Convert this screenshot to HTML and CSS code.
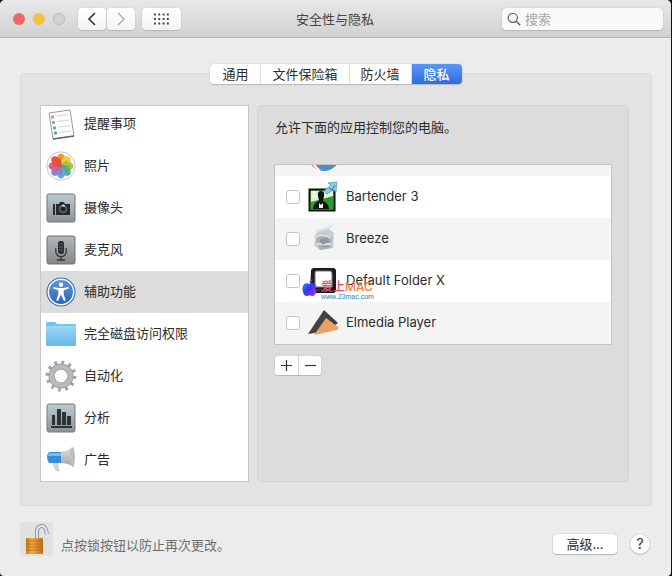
FILE: index.html
```html
<!DOCTYPE html>
<html lang="zh-CN">
<head>
  <meta charset="UTF-8">
  <meta name="viewport" content="width=device-width, initial-scale=1.0">
  <title>安全性与隐私</title>
  <link rel="stylesheet" href="styles.css">
</head>
<body>
  <div class="window">
    <header class="titlebar">
      <div class="controls">
        <div class="lights">
          <span class="light red"></span>
          <span class="light yellow"></span>
          <span class="light off"></span>
        </div>
        <div class="nav">
          <button class="tool" aria-label="后退">
            <svg width="10" height="14" viewBox="0 0 10 14"><path d="M8 1 2 7l6 6" fill="none" stroke="#333" stroke-width="1.6"/></svg>
          </button>
          <button class="tool" aria-label="前进">
            <svg width="10" height="14" viewBox="0 0 10 14"><path d="m2 1 6 6-6 6" fill="none" stroke="#a6a6a6" stroke-width="1.3"/></svg>
          </button>
        </div>
        <button class="tool grid-button" aria-label="显示全部">
          <svg width="15" height="12" viewBox="0 0 15 12"><path d="M0 1.500h15M0 6h15M0 10.500h15" stroke="#444" stroke-width="1.800" stroke-dasharray="1.900 2.400"/></svg>
        </button>
      </div>
      <h1>安全性与隐私</h1>
      <label class="search">
        <svg width="14" height="14" viewBox="0 0 14 14"><circle cx="5.800" cy="5.800" r="4.600" fill="none" stroke="#555" stroke-width="1.1"/><path d="m9.200 9.200 4 4" stroke="#555" stroke-width="1.3"/></svg>
        <input type="text" placeholder="搜索" aria-label="搜索">
      </label>
    </header>

    <main>
      <div class="tabs">
        <button>通用</button>
        <button>文件保险箱</button>
        <button>防火墙</button>
        <button class="active">隐私</button>
      </div>

      <section class="panel">
        <ul class="services">
          <li>
            <svg width="30" height="32" viewBox="0 0 30 32"><path d="M3 5 24 2l4 26-21 3z" fill="#fdfdfd" stroke="#999" /><path d="m7 31 21-3" stroke="#666" stroke-width="1.5"/><path d="m11 8 11-1.500M11.500 13.500l12-1.500M12.500 19l12-1.500M13 24.500l12-1.500" stroke="#d4d4d4"/><circle cx="6.500" cy="9" r="1.700" fill="#ee8a73"/><circle cx="7.500" cy="14.500" r="1.700" fill="#65b6cc"/><circle cx="8.500" cy="20" r="1.700" fill="#5cb687"/><circle cx="9.500" cy="25" r="1.700" fill="#58a98e"/></svg>
            <span>提醒事项</span>
          </li>
          <li>
            <svg width="30" height="30" viewBox="0 0 30 30"><circle cx="15" cy="15" r="14.200" fill="#fbfbfb" stroke="#c5c8ce"/><g opacity=".9"><ellipse cx="15" cy="8.500" rx="4.300" ry="6" fill="#f58e1e"/><ellipse cx="15" cy="8.500" rx="4.300" ry="6" fill="#e8cf25" transform="rotate(45 15 15)"/><ellipse cx="15" cy="8.500" rx="4.300" ry="6" fill="#9cc235" transform="rotate(90 15 15)"/><ellipse cx="15" cy="8.500" rx="4.300" ry="6" fill="#45a878" transform="rotate(135 15 15)"/><ellipse cx="15" cy="8.500" rx="4.300" ry="6" fill="#5b9bd8" transform="rotate(180 15 15)"/><ellipse cx="15" cy="8.500" rx="4.300" ry="6" fill="#8579c2" transform="rotate(225 15 15)"/><ellipse cx="15" cy="8.500" rx="4.300" ry="6" fill="#cf5482" transform="rotate(270 15 15)"/><ellipse cx="15" cy="8.500" rx="4.300" ry="6" fill="#e8432f" transform="rotate(315 15 15)"/></g><path d="M15 15V6M15 15l6-6M15 15h9M15 15l6 6M15 15v9M15 15l-6 6M15 15H6M15 15 9 9" stroke="#8a3b2c" stroke-width=".6" opacity=".5"/></svg>
            <span>照片</span>
          </li>
          <li>
            <svg width="30" height="30" viewBox="0 0 30 30">
              <defs><linearGradient id="metal" x2="0" y2="1"><stop offset="0" stop-color="#bccbd3"/><stop offset="1" stop-color="#8c9295"/></linearGradient></defs>
              <rect x="1" y="1" width="28" height="28" rx="2" fill="url(#metal)" stroke="#70777c"/><path d="M7 11h2v11H7zM10 11h3l1-2h4l1 2h5v11H10z" fill="#272b2e"/><circle cx="17" cy="16" r="4" fill="#62696e"/><circle cx="17" cy="16" r="2.500" fill="#202326"/><path d="m15 13 3-2 1 3z" fill="#d6dcdf"/></svg>
            <span>摄像头</span>
          </li>
          <li>
            <svg width="30" height="30" viewBox="0 0 30 30">
              <defs><linearGradient id="steel" x2="0" y2="1"><stop offset="0" stop-color="#b2b9bb"/><stop offset="1" stop-color="#858787"/></linearGradient></defs>
              <rect x="1" y="1" width="28" height="28" rx="2" fill="url(#steel)" stroke="#6d7072"/><rect x="12" y="6" width="6" height="13" rx="2.500" fill="#2c2f31"/><path d="M13 9h4M13 12h4M13 15h4" stroke="#70777a" stroke-width=".7"/><path d="M9.800 13v3.500a5.200 5.200 0 0 0 10.400 0V13M15 22v2.500M11 25h8" fill="none" stroke="#34383a" stroke-width="1.300"/></svg>
            <span>麦克风</span>
          </li>
          <li class="selected">
            <svg width="30" height="32" viewBox="0 0 30 32">
              <defs><linearGradient id="access" x2="0" y2="1"><stop offset="0" stop-color="#6596d7"/><stop offset="1" stop-color="#2865b8"/></linearGradient></defs>
              <circle cx="15" cy="16" r="14.500" fill="#3468ac"/><circle cx="15" cy="16" r="12.700" fill="url(#access)" stroke="#f3f7ff" stroke-width="1.600"/><circle cx="15" cy="8.700" r="2.200" fill="#fff"/><path d="m7.500 11 5 1h5l5-1 .4 1.500-5.200 1.800v4l2 6-1.700.7-3-6.500-3 6.500-1.700-.7 2-6v-4l-5.200-1.800z" fill="#fff"/></svg>
            <span>辅助功能</span>
          </li>
          <li>
            <svg width="32" height="26" viewBox="0 0 32 26">
              <defs><linearGradient id="folder" x2="0" y2="1"><stop offset="0" stop-color="#9bd8f7"/><stop offset="1" stop-color="#67b8e8"/></linearGradient></defs>
              <path d="M1 2q0-1 1-1h8l2 2h18q1 0 1 1v20H1z" fill="#79c2ea"/><path d="M1 5h30v19q0 1-1 1H2q-1 0-1-1z" fill="url(#folder)"/></svg>
            <span>完全磁盘访问权限</span>
          </li>
          <li>
            <svg width="32" height="32" viewBox="0 0 32 32"><circle cx="16" cy="16" r="13.500" fill="none" stroke="#a3a3a3" stroke-width="4" stroke-dasharray="2.800 4.270"/><circle cx="16" cy="16" r="9.500" fill="none" stroke="#949494" stroke-width="6"/><circle cx="16" cy="16" r="9.500" fill="none" stroke="#bababa" stroke-width="4.600"/></svg>
            <span>自动化</span>
          </li>
          <li>
            <svg width="30" height="30" viewBox="0 0 30 30"><rect x="1" y="1" width="28" height="28" rx="2" fill="url(#metal)" stroke="#777d80"/><path d="M6 12h3v10H6zM11 6h4v16h-4zM16 9h4v13h-4zM21 13h4v9h-4zM5 23h21v2H5z" fill="#2d3235"/></svg>
            <span>分析</span>
          </li>
          <li>
            <svg width="30" height="28" viewBox="0 0 30 28">
              <defs><linearGradient id="horn" x2="0" y2="1"><stop offset="0" stop-color="#e1e1e1"/><stop offset="1" stop-color="#9fa2a4"/></linearGradient></defs>
              <path d="m6 16 4 8 3 1-2-9z" fill="#d3d7db" stroke="#adb3b7" stroke-width=".6"/><path d="M14 6q8-1 12-5l2 20q-6-4-14-4z" fill="url(#horn)"/><ellipse cx="26.500" cy="11" rx="2.500" ry="10" fill="#bcbec0"/><path d="M3 6h12v11H3Q-1 11 3 6z" fill="#388ed5"/><path d="M3 7h12v3H2z" fill="#77bbed"/></svg>
            <span>广告</span>
          </li>
        </ul>

        <div class="detail">
          <p>允许下面的应用控制您的电脑。</p>

          <div class="apps-wrap">
            <ul class="apps">
              <li class="clipped">
                <svg width="30" height="34" viewBox="0 0 30 34"><circle cx="16" cy="17" r="16" fill="#4b8ecb"/><path d="M1 16q2 12 10 16.500l1-1-4-15z" fill="#de5460"/><path d="m3 24 9 9" stroke="#fff" stroke-width="2"/></svg>
              </li>
              <li>
                <input type="checkbox" id="bartender">
                <label for="bartender">
                  <svg width="30" height="32" viewBox="0 0 30 32"><rect x="1.500" y="8.500" width="25" height="21" fill="#5fc847" stroke="#111" stroke-width="2"/><path d="M3 10h22v7L3 21z" fill="#e8f3df"/><path d="m3 21 22-6v13H3z" fill="#2a9c2c"/><path d="M5 28q1-7 6-8l-1-5q-1-5 3-5t3 5l-1 5q5 1 6 8z" fill="#0b1610"/><path d="m11 22 2 2 2-2v5h-4z" fill="#fff"/><path d="m16 10 7-6-3-2 9-1-1 10-3-2-6 4z" fill="#8bcee7" stroke="#518ea9" stroke-width=".7"/><path d="m21 7 3 2 3-5" fill="none" stroke="#396f8a"/></svg>
                  <span>Bartender 3</span>
                </label>
              </li>
              <li>
                <input type="checkbox" id="breeze">
                <label for="breeze">
                  <svg width="30" height="30" viewBox="0 0 30 30"><path d="M9 8 20 4l6 5-1 15-13 2-6-5z" fill="#c9ccd0"/><path d="m7 11 9-2 8 4-1 11-11 2-3-7z" fill="#acb0b6"/><path d="m8 7 10-2 7-4M6 14q8-6 17 0M9 20h14" fill="none" stroke="#dfe2e5" stroke-width="2"/><path d="m12 16 7-2 2 4-7 2zM14 23l7-1" fill="#92979e" stroke="#92979e"/></svg>
                  <span>Breeze</span>
                </label>
              </li>
              <li>
                <input type="checkbox" id="folderx">
                <label for="folderx">
                  <svg width="30" height="30" viewBox="0 0 30 30"><path d="M6 2h19q3 0 3 3v19q0 3-3 3H5q-3 0-3-3L3 5q0-3 3-3z" fill="#1d1d1f"/><path d="M8 5h14q2 0 2 2v14H7V7q0-2 1-2z" fill="#fff" stroke="#777"/><path d="M7 24h16" stroke="#555"/></svg>
                  <span>Default Folder X</span>
                </label>
              </li>
              <li>
                <input type="checkbox" id="elmedia">
                <label for="elmedia">
                  <svg width="32" height="28" viewBox="0 0 32 28"><path d="M17 1 31 14 20 22 1 25z" fill="#3d4244"/><path d="M19 9 31 18q1 2-1 3L7 26z" fill="#e9a165"/></svg>
                  <span>Elmedia Player</span>
                </label>
              </li>
            </ul>

            <div class="watermark">
              <svg width="15" height="18" viewBox="0 0 15 18">
                <defs><linearGradient id="apple" x2="1" y2="1"><stop offset="0" stop-color="#20b8ff"/><stop offset=".5" stop-color="#3633f3"/><stop offset="1" stop-color="#c12cef"/></linearGradient></defs>
                <path d="M7.500 5C10 3 12.500 4 14 6q-2 3 .5 7-2 4-4 4-1.500 0-3-.7-1.500.7-3 .7C2 17 0 12 .5 9 1 4.500 4.500 3.500 7.500 5zM7.500 4q0-3 3-4 0 3-3 4z" fill="url(#apple)"/></svg>
              <div class="brand">
                <b><i>爱上</i>MAC</b>
                <small>www.23mac.com</small>
              </div>
            </div>
          </div>

          <div class="add-remove">
            <button aria-label="添加"><svg width="13" height="13" viewBox="0 0 13 13"><path d="M1 6.500h11M6.500 1v11" stroke="#333" stroke-width="1.200"/></svg></button>
            <button aria-label="移除"><svg width="13" height="13" viewBox="0 0 13 13"><path d="M1 6.500h11" stroke="#333" stroke-width="1.200"/></svg></button>
          </div>
        </div>
      </section>
    </main>

    <footer>
      <button class="lock" aria-label="锁定">
        <svg width="26" height="32" viewBox="0 0 26 32">
          <defs><linearGradient id="gold"><stop offset="0" stop-color="#c77b1b"/><stop offset=".35" stop-color="#f3ad43"/><stop offset="1" stop-color="#bd6f16"/></linearGradient></defs>
          <path d="M13 15V9q0-6 5-6 4 0 5 8" fill="none" stroke="#8c95a4" stroke-width="4"/><path d="M13 15V9q0-6 5-6 4 0 5 8" fill="none" stroke="#e5eaf1" stroke-width="2"/><rect x="2" y="15" width="17" height="16" rx="1" fill="url(#gold)"/><path d="M2 18h17M2 21h17M2 24h17M2 27h17" stroke="#a76316" stroke-width=".7"/></svg>
      </button>
      <span class="hint">点按锁按钮以防止再次更改。</span>
      <button class="advanced">高级...</button>
      <button class="help" aria-label="帮助">?</button>
    </footer>
  </div>
</body>
</html>
```

FILE: styles.css
```css
* {
  box-sizing: border-box;
}

body {
  margin: 0;
  background-color: #111;
  font-family: Inter, "Noto Sans CJK SC", sans-serif;
  font-size: 13px;
  line-height: 18px;
  color: #2b2b2b;
}

button, input {
  font: inherit;
  color: inherit;
}

button {
  border: none;
  padding: 0;
  background-color: #fff;
}

svg {
  display: block;
  flex: none;
}

ul {
  list-style: none;
  margin: 0;
  padding: 0;
}

.window {
  display: flex;
  flex-direction: column;
  min-height: 100vh;
  margin-right: 1px;
  background-color: #ececec;
  border-radius: 5px 5px 4px 4px;
  overflow: hidden;
}

/* title bar */
.titlebar {
  display: grid;
  grid-template-columns: 1fr auto 1fr;
  align-items: center;
  height: 38px;
  padding: 0 8px 0 13px;
  background: linear-gradient(#e8e8e8, #d1d1d1);
  border-bottom: 1px solid #b4b4b4;
}

.titlebar h1 {
  margin: 0 6px 0 0;
  font-size: 13px;
  font-weight: 400;
  color: #444;
}

.controls, .lights, .nav {
  display: flex;
  align-items: center;
}

.lights {
  gap: 8px;
  margin-right: 13px;
}

.light {
  width: 12px;
  height: 12px;
  border-radius: 50%;
}

.red {
  background-color: #ec6a61;
}

.yellow {
  background-color: #f5bf42;
}

.off {
  background-color: #d2d2d2;
  border: 1px solid #bdbdbd;
}

.nav {
  gap: 1px;
  margin-right: 7px;
}

.tool {
  display: flex;
  align-items: center;
  justify-content: center;
  width: 28px;
  height: 22px;
  border-radius: 4px;
  background: linear-gradient(#fff, #f4f4f4);
  box-shadow: 0 0 1px #999, 0 1px 1px #bbb;
}

.grid-button {
  width: 39px;
}

.search {
  display: flex;
  align-items: center;
  justify-self: end;
  gap: 4px;
  width: 161px;
  height: 22px;
  padding: 0 5px;
  border-radius: 4px;
  background-color: #f9f9f9;
  box-shadow: 0 0 1px #999, 0 1px 1px #bbb;
}

.search input {
  flex: 1;
  min-width: 0;
  border: none;
  padding: 0;
  outline: none;
  background: none;
}

.search input::placeholder {
  color: #a6a6a6;
}

/* tabs */
main {
  padding: 26px 19px 0 20px;
}

.tabs {
  display: flex;
  position: relative;
  width: max-content;
  margin: 0 auto -11px;
  border-radius: 4px;
  box-shadow: 0 0 1px #999, 0 1px 1px #bbb;
}

.tabs button {
  height: 20px;
  padding: 0 11px 1px;
  border-right: 1px solid #ddd;
}

.tabs button:first-child {
  padding: 0 12px 1px;
  border-radius: 4px 0 0 4px;
}

.tabs .active {
  padding: 0 12px 1px;
  border: none;
  border-radius: 0 4px 4px 0;
  background: linear-gradient(#5b98f3, #2c6be2);
  color: #fff;
  font-weight: 500;
}

/* privacy panel */
.panel {
  display: grid;
  grid-template-columns: 209px 1fr;
  gap: 8px;
  padding: 31px 22px 23px 19px;
  border: 1px solid #dcdcdc;
  border-radius: 4px;
  background-color: #e3e3e3;
}

.services {
  display: flex;
  flex-direction: column;
  justify-content: flex-end;
  height: 377px;
  border: 1px solid #c6c6c6;
  background-color: #fff;
  overflow: hidden;
}

.services li {
  display: flex;
  flex: none;
  align-items: center;
  height: 42px;
  padding-left: 4px;
}

.services span, .apps span {
  padding-bottom: 2px;
}

.services svg {
  width: 32px;
  margin-right: 7px;
}

.services .selected {
  background-color: #dcdcdc;
}

.detail {
  padding: 12px 16px;
  border: 1px solid #d3d3d3;
  border-radius: 4px;
  background-color: #dcdcdc;
}

.detail p {
  margin: 0 0 28px 1px;
}

.apps-wrap {
  position: relative;
}

.apps {
  display: flex;
  flex-direction: column;
  justify-content: flex-end;
  height: 181px;
  border: 1px solid #c3c3c3;
  background-color: #fff;
  overflow: hidden;
}

.apps li {
  display: flex;
  flex: none;
  align-items: center;
  height: 42px;
  padding-left: 11px;
}

.apps li:nth-child(odd) {
  background-color: #f4f4f4;
}

.apps .clipped {
  padding-left: 33px;
}

.apps input {
  appearance: none;
  width: 14px;
  height: 14px;
  margin: 0 7px 0 0;
  border: 1px solid #c4c4c4;
  border-radius: 3px;
  background-color: #fff;
}

.apps label {
  display: flex;
  align-items: center;
}

.apps label svg {
  width: 32px;
  margin-right: 7px;
}

/* site mark lying over the list */
.watermark {
  display: flex;
  position: absolute;
  left: 28px;
  top: 115px;
  gap: 4px;
}

.brand b {
  display: block;
  font-size: 12px;
  font-weight: 500;
  line-height: 16px;
  color: #f47a3c;
}

.brand i {
  font-style: normal;
  color: #f0445a;
}

.brand small {
  display: block;
  font-family: "Liberation Sans", sans-serif;
  font-size: 7px;
  line-height: 4px;
  color: #1687a8;
}

.add-remove {
  display: flex;
  width: max-content;
  margin: 11px 0 0 1px;
  border-radius: 3px;
  box-shadow: 0 0 1px #888, 0 1px 1px #bbb;
}

.add-remove button {
  display: flex;
  align-items: center;
  justify-content: center;
  width: 23px;
  height: 19px;
  border-radius: 3px 0 0 3px;
}

.add-remove button + button {
  border-left: 1px solid #d2d2d2;
  border-radius: 0 3px 3px 0;
}

/* footer */
footer {
  display: flex;
  align-items: center;
  padding: 16px 21px 20px 20px;
}

.lock {
  display: flex;
  align-items: center;
  justify-content: center;
  width: 33px;
  height: 34px;
  border-radius: 3px;
  background-color: #e1e1e1;
}

.hint {
  margin: 12px auto 0 8px;
  color: #6e6e6e;
}

.advanced {
  width: 64px;
  height: 20px;
  margin: 10px 13px 0 0;
  border-radius: 4px;
  box-shadow: 0 0 1px #888, 0 1px 1px #bbb;
}

.help {
  width: 20px;
  height: 20px;
  margin-top: 10px;
  border-radius: 50%;
  font-size: 14px;
  box-shadow: 0 0 1px #888, 0 1px 1px #bbb;
}
```
